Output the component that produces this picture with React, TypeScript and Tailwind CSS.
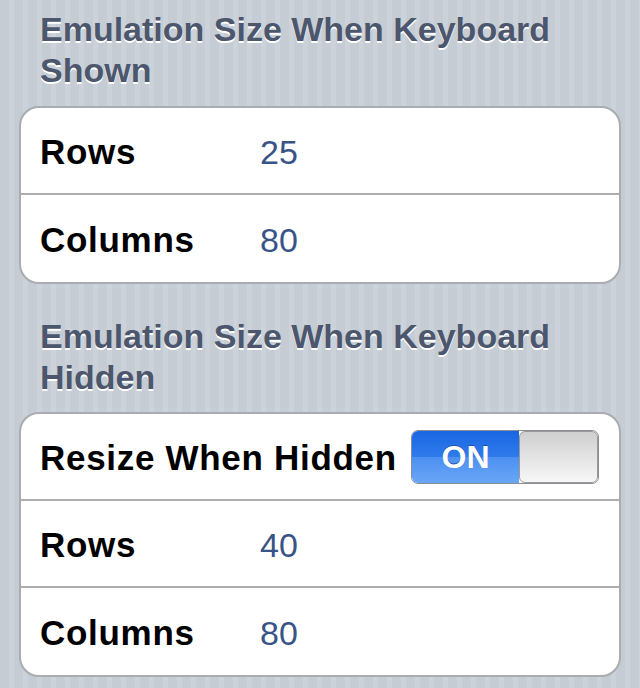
const font = "font-['Liberation_Sans',Arial,sans-serif]";

function SectionHeader({ lines }: { lines: string[] }) {
  return (
    <h2 className="pl-[21px] text-[34px] font-bold leading-[41px] text-[#4c566c] [text-shadow:0_2px_0_#ffffff]">
      {lines.map((l) => (
        <div key={l}>{l}</div>
      ))}
    </h2>
  );
}

function Row({ label, value }: { label: string; value: string }) {
  return (
    <div className="flex h-[87px] items-center pl-[19px] pt-[4px]">
      <span className="w-[220px] text-[35px] font-bold tracking-[0.7px] text-black">{label}</span>
      <span className="text-[34px] text-[#385487]">{value}</span>
    </div>
  );
}

function Toggle() {
  return (
    <div className="flex h-[54px] w-[188px] overflow-hidden rounded-[7px] border border-[#8a8f96]">
      <div className="relative flex w-[107px] items-center justify-center bg-[linear-gradient(#1a66e2_0%,#2f7bec_50%,#4b90f1_50%,#6aa6f5_100%)]">
        <span className="text-[32px] font-bold text-white [text-shadow:0_-1px_0_#1d4fa8]">ON</span>
      </div>
      <div className="flex-1 rounded-[6px] border border-[#9a9a9a] bg-[linear-gradient(#cfcfcf,#f7f7f7)]" />
    </div>
  );
}

export default function App() {
  return (
    <div
      className={`${font} h-[688px] w-[640px] overflow-hidden bg-[repeating-linear-gradient(90deg,#c5ccd4_0px,#c5ccd4_9px,#cbd2d9_9px,#cbd2d9_14px)] px-[19px] pt-[9px]`}
    >
      <SectionHeader lines={["Emulation Size When Keyboard", "Shown"]} />
      <div className="mt-[15px] divide-y-2 divide-[#acaeb1] rounded-[20px] border-2 border-[#a9acb0] bg-white">
        <Row label="Rows" value="25" />
        <Row label="Columns" value="80" />
      </div>

      <div className="mt-[32px]">
        <SectionHeader lines={["Emulation Size When Keyboard", "Hidden"]} />
      </div>
      <div className="mt-[14px] divide-y-2 divide-[#acaeb1] rounded-[20px] border-2 border-[#a9acb0] bg-white">
        <div className="flex h-[87px] items-center justify-between pl-[19px] pr-[20px]">
          <span className="pt-[4px] text-[35px] font-bold tracking-[0.7px] text-black">Resize When Hidden</span>
          <Toggle />
        </div>
        <Row label="Rows" value="40" />
        <Row label="Columns" value="80" />
      </div>
    </div>
  );
}
